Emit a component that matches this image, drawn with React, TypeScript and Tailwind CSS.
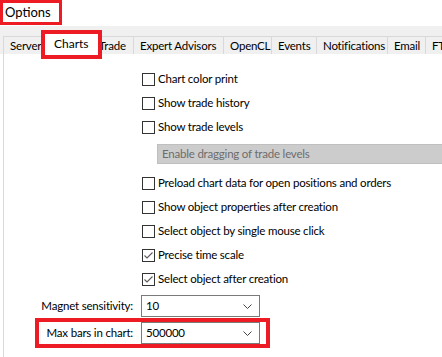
import { ChevronDown } from 'lucide-react';

const font = { fontFamily: 'Lato, "Liberation Sans", sans-serif' };

const TABS = [
  { label: 'Server', w: 'w-[41px]' },
  { label: 'Charts', w: 'w-[61px]', active: true },
  { label: 'Trade', w: 'w-[42px]' },
  { label: 'Expert Advisors', w: 'w-[91px]' },
  { label: 'OpenCL', w: 'w-[49px]' },
  { label: 'Events', w: 'w-[46px]' },
  { label: 'Notifications', w: 'w-[72px]' },
  { label: 'Email', w: 'w-[39px]' },
  { label: 'FTP', w: 'w-[40px]' },
];

const OPTIONS_TOP = [
  { label: 'Chart color print', checked: false },
  { label: 'Show trade history', checked: false },
  { label: 'Show trade levels', checked: false },
];

const OPTIONS_BOTTOM = [
  { label: 'Preload chart data for open positions and orders', checked: false },
  { label: 'Show object properties after creation', checked: false },
  { label: 'Select object by single mouse click', checked: false },
  { label: 'Precise time scale', checked: true },
  { label: 'Select object after creation', checked: true },
];

// ── Checkbox row ──────────────────────────────────────────────────────────────

const CheckRow = ({ label, checked }: { label: string; checked: boolean }) => (
  <div className="h-6 flex items-center">
    <span className="w-[13px] h-[13px] border border-[#333333] bg-white flex items-center justify-center shrink-0">
      {checked && (
        <svg width="11" height="11" viewBox="0 0 11 11">
          <polyline points="1.5,5.5 4,8 9.5,2.5" fill="none" stroke="#5a5a5a" strokeWidth="1.1" />
        </svg>
      )}
    </span>
    <span className="ml-[3px] text-[11.5px] tracking-[-0.2px] text-black whitespace-nowrap leading-none">{label}</span>
  </div>
);

// ── Combo box ─────────────────────────────────────────────────────────────────

const Combo = ({ value }: { value: string }) => (
  <div className="w-[119px] h-[22px] border border-[#7a7a7a] bg-white flex items-center pl-[4px] pr-[6px]">
    <span className="flex-1 text-[11.5px] tracking-[-0.2px] text-black leading-none">{value}</span>
    <svg width="9" height="5" viewBox="0 0 9 5" className="mr-[1px]">
      <polyline points="0.5,0.5 4.5,4.5 8.5,0.5" fill="none" stroke="#444444" strokeWidth="1" />
    </svg>
  </div>
);

export default function App() {
  return (
    <div className="w-[442px] h-[357px] bg-white overflow-hidden flex flex-col" style={font}>
      {/* ── Title ── */}
      <div className="h-[26px] shrink-0">
        <div className="w-[62px] h-[25px] border-[3px] border-[#ed1c24] flex items-center pl-[2px]">
          <span className="text-[13px] text-black leading-none">Options</span>
        </div>
      </div>

      {/* ── Tab strip ── */}
      <div className="h-[28px] shrink-0 bg-[#f0f0f0] flex items-end pl-[3px] relative z-10">
        {TABS.map((t) =>
          t.active ? (
            <div
              key={t.label}
              className={`${t.w} h-[29px] mb-[-5px] -ml-[3px] mr-[-9px] shrink-0 relative z-20 border-4 border-[#ed1c24] bg-white flex items-start pt-[3px] pl-[9px]`}
            >
              <span className="text-[12px] text-black leading-[14px] whitespace-nowrap">{t.label}</span>
            </div>
          ) : (
            <div
              key={t.label}
              className={`${t.w} h-[18px] shrink-0 border border-[#d9d9d9] border-b-0 -ml-px first:ml-0 bg-[#f0f0f0] flex items-center pl-[6px] overflow-hidden`}
            >
              <span className="text-[11.5px] tracking-[-0.2px] text-black leading-none whitespace-nowrap">{t.label}</span>
            </div>
          )
        )}
      </div>

      {/* ── Page ── */}
      <div className="flex-1 ml-[3px] border-l border-[#d9d9d9] flex flex-col">
        <div className="pl-[138px] pt-[13px] flex flex-col">
          {OPTIONS_TOP.map((o) => (
            <CheckRow key={o.label} {...o} />
          ))}
          <div className="ml-[15px] mt-[5px] mb-[7px] h-[20px] bg-[#cccccc] border border-[#bfbfbf] border-r-0 flex items-center pl-[4px]">
            <span className="text-[11.5px] tracking-[-0.2px] text-[#6d6d6d] leading-none whitespace-nowrap">
              Enable dragging of trade levels
            </span>
          </div>
          {OPTIONS_BOTTOM.map((o) => (
            <CheckRow key={o.label} {...o} />
          ))}
        </div>

        <div className="ml-[31px] mt-[4px] flex flex-col">
          <div className="flex items-center px-[4px]">
            <span className="w-[94px] text-right text-[11.5px] tracking-[-0.2px] text-black whitespace-nowrap">
              Magnet sensitivity:
            </span>
            <div className="ml-[8px]">
              <Combo value="10" />
            </div>
          </div>
          <div className="mt-[1px] w-[235px] border-4 border-[#ed1c24] flex items-center">
            <span className="w-[94px] text-right text-[11.5px] tracking-[-0.2px] text-black whitespace-nowrap">
              Max bars in chart:
            </span>
            <div className="ml-[8px]">
              <Combo value="500000" />
            </div>
          </div>
        </div>
      </div>
    </div>
  );
}
